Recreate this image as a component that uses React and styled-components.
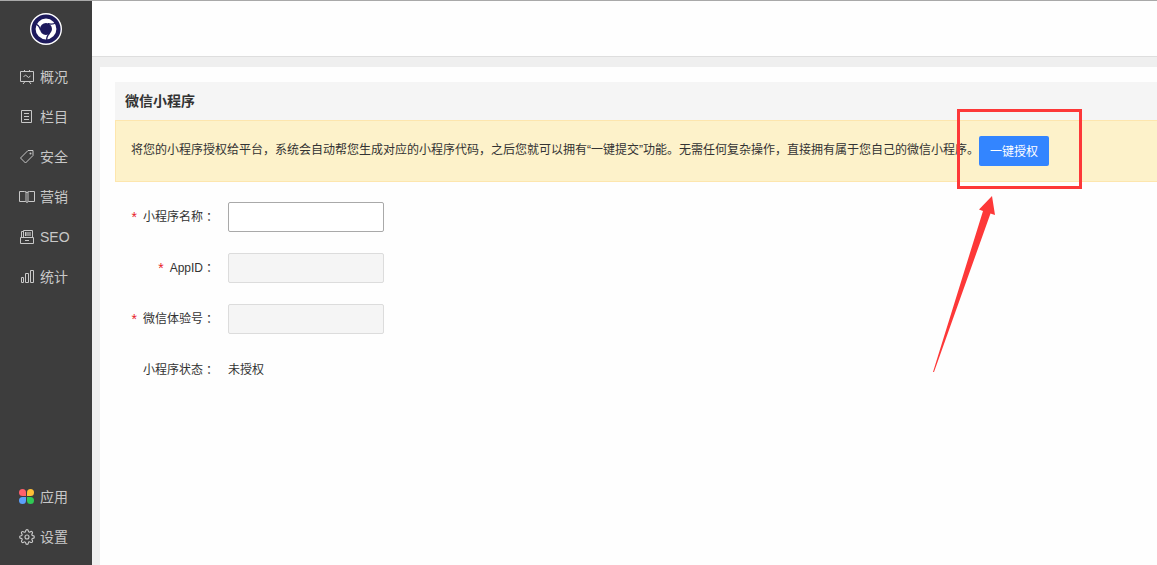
import React from 'react'
import styled, { createGlobalStyle } from 'styled-components'
import { FiSettings } from 'react-icons/fi'

const GlobalStyle = createGlobalStyle`
  * {
    box-sizing: border-box;
  }

  body {
    margin: 0;
    background: #efefef;
    color: #333;
    font-family: "Liberation Sans", "Noto Sans CJK SC", sans-serif;
    font-size: 12px;
    line-height: 18px;
  }
`

const Layout = styled.div`
  display: flex;
  min-height: 100vh;
  border-top: 1px solid #a9a9a9;
  overflow: hidden;
`

const Sidebar = styled.nav`
  display: flex;
  flex-direction: column;
  flex: none;
  width: 92px;
  padding: 12px 0 8px;
  background: #3d3d3d;
`

const LogoLink = styled.a`
  align-self: center;
  height: 32px;
  margin-bottom: 12px;
`

const NavList = styled.ul`
  margin: 0;
  padding: 0;
  list-style: none;
`

const BottomNavList = styled(NavList)`
  margin-top: auto;
`

const NavLink = styled.a`
  display: flex;
  align-items: center;
  gap: 5px;
  height: 40px;
  padding-left: 19px;
  color: #c8c8c8;
  font-size: 14px;
  line-height: 20px;
  text-decoration: none;
`

const Icon = styled.svg.attrs({ width: 16, height: 16, viewBox: '0 0 16 16', 'aria-hidden': true })`
  flex: none;
  fill: none;
  stroke: currentColor;
  stroke-width: 1;
`

const SettingsIcon = styled(FiSettings).attrs({ size: 16, 'aria-hidden': true })`
  flex: none;
  stroke-width: 1.7;
`

const Main = styled.div`
  display: flex;
  flex-direction: column;
  flex: 1;
  min-width: 0;
`

const TopBar = styled.header`
  height: 56px;
  border-bottom: 1px solid #dedede;
  background: #fefefe;
`

const Panel = styled.main`
  flex: 1;
  margin: 10px 0 0 8px;
  padding: 15px 0 15px 15px;
  background: #fefefe;
`

const PanelTitle = styled.h1`
  margin: 0;
  padding: 0 10px;
  background: #f5f5f5;
  font-size: 14px;
  line-height: 38px;
`

const Notice = styled.div`
  display: flex;
  align-items: center;
  height: 62px;
  padding-left: 15px;
  border: 1px solid #fde6ae;
  border-right: 0;
  background: #fdf2ca;
`

const NoticeText = styled.p`
  margin: 0;
  padding-bottom: 2px;
  white-space: nowrap;
`

const Highlighted = styled.div`
  position: relative;
  flex: none;
`

const AuthButton = styled.button`
  display: block;
  width: 70px;
  height: 30px;
  padding: 2px 0 0;
  border: 0;
  border-radius: 2px;
  background: #3385ff;
  color: #fff;
  font: inherit;
`

const HighlightBox = styled.div`
  position: absolute;
  top: -27px;
  left: -22px;
  width: 125px;
  height: 80px;
  border: 3px solid #fd3838;
  pointer-events: none;
`

const HighlightArrow = styled.svg`
  position: absolute;
  top: 60px;
  left: -46px;
  fill: #fd3838;
  pointer-events: none;
`

const Form = styled.form`
  display: flex;
  flex-direction: column;
  gap: 21px;
  padding-top: 20px;
`

const Field = styled.div`
  display: flex;
  align-items: center;
  gap: 13px;
  height: 30px;
`

const FieldLabel = styled.label`
  display: flex;
  justify-content: flex-end;
  width: 100px;
  white-space: nowrap;
`

// centred in its cell, unlike the simplified form
const Colon = styled.span.attrs({ lang: 'zh-TW', children: '：' })`
  font-family: "Noto Sans CJK TC", sans-serif;
`

const Required = styled.span`
  margin-right: 6px;
  color: #e8202a;
  font-size: 14px;
`

const TextInput = styled.input`
  width: 156px;
  height: 30px;
  padding: 0 8px;
  border: 1px solid #a9a9a9;
  border-radius: 2px;
  background: #fff;
  color: #333;
  font: inherit;

  &:disabled {
    border-color: #dcdcdc;
    background: #f5f5f5;
  }
`

const Logo = () => (
  <svg width="32" height="32" viewBox="0 0 32 32" aria-hidden="true">
    <defs>
      <path id="cut" d="M10.500 17C9.500 13.500 8.500 11.500 5 10.800" />
    </defs>
    <circle cx="16" cy="16" r="15.300" fill="#1d1a5c" stroke="#fff" strokeWidth="1.400" />
    <circle cx="16" cy="16" r="8.200" fill="none" stroke="#fff" strokeWidth="4.400" />
    <g fill="none" stroke="#1d1a5c" strokeWidth="1.300">
      <use href="#cut" />
      <use href="#cut" transform="rotate(120 16 16)" />
      <use href="#cut" transform="rotate(240 16 16)" />
    </g>
  </svg>
)

const OverviewIcon = () => (
  <Icon>
    <path d="M1.500 2.500h13v10h-13zM5.500 1v2M10.500 1v2M6 12.500l-2 2.500M10 12.500l2 2.500" />
    <path d="M4.500 8l2-2 3 2.500 2-1.500" />
  </Icon>
)

const ColumnIcon = () => (
  <Icon>
    <path d="M2.500 1.500h10v12h-10zM5 4.500h5M5 7.500h5M5 10.500h5" />
  </Icon>
)

const SecurityIcon = () => (
  <Icon>
    <path d="M9 1.500h5v5L6.500 14L1.500 9z" strokeLinejoin="round" />
    <circle cx="11.500" cy="4.500" r="1" fill="currentColor" stroke="none" />
  </Icon>
)

const MarketingIcon = () => (
  <Icon>
    <path d="M6 3h4v10h-4z" fill="#7f7f7f" stroke="none" />
    <path d="M6.500 12.500h-6v-10h5q2.500 0 2.500 1.500q0-1.500 2.500-1.500h5v10h-6M6.500 12.500l1.500 1 1.500-1" />
  </Icon>
)

const SeoIcon = () => (
  <Icon>
    <path d="M1.500 8.500h13v6h-13zM6 11.500h4M4.500 8.500v-7h9v7M2.500 8.500v-6h2" />
    <path d="M7 3h5v4h-5z" fill="#8a8a8a" stroke="none" />
    <path d="M6.500 3v4" />
  </Icon>
)

const StatsIcon = () => (
  <Icon>
    <path d="M2.500 8.500h2v5h-2zM6.500 4.500h3v9h-3zM11.500 1.500h3v12h-3z" />
  </Icon>
)

const AppsIcon = () => (
  <Icon>
    <g stroke="none">
      <path d="M7 7H3.500A3.500 3.500 0 1 1 7 3.500z" fill="#ff5f6b" />
      <path d="M8 7H11.500A3.500 3.500 0 1 0 8 3.500z" fill="#ffbf36" />
      <path d="M7 8H3.500A3.500 3.500 0 1 0 7 11.500z" fill="#5ba0fb" />
      <path d="M8 8H11.500A3.500 3.500 0 1 1 8 11.500z" fill="#30c955" />
    </g>
  </Icon>
)

const mainNav = [
  { label: '概况', icon: OverviewIcon },
  { label: '栏目', icon: ColumnIcon },
  { label: '安全', icon: SecurityIcon },
  { label: '营销', icon: MarketingIcon },
  { label: 'SEO', icon: SeoIcon },
  { label: '统计', icon: StatsIcon }
]

const bottomNav = [
  { label: '应用', icon: AppsIcon },
  { label: '设置', icon: SettingsIcon }
]

const fields = [
  { id: 'name', label: '小程序名称' },
  { id: 'appid', label: 'AppID', disabled: true },
  { id: 'trial', label: '微信体验号', disabled: true }
]

const renderNav = items => items.map(({ label, icon: ItemIcon }) => (
  <li key={label}>
    <NavLink href="#"><ItemIcon />{label}</NavLink>
  </li>
))

const App = () => (
  <>
    <GlobalStyle />
    <Layout lang="zh-CN">
      <Sidebar>
        <LogoLink href="#" aria-label="首页"><Logo /></LogoLink>
        <NavList>{renderNav(mainNav)}</NavList>
        <BottomNavList>{renderNav(bottomNav)}</BottomNavList>
      </Sidebar>
      <Main>
        <TopBar />
        <Panel>
          <PanelTitle>微信小程序</PanelTitle>
          <Notice>
            <NoticeText>
              将您的小程序授权给平台，系统会自动帮您生成对应的小程序代码，之后您就可以拥有“一键提交”功能。无需任何复杂操作，直接拥有属于您自己的微信小程序。
            </NoticeText>
            <Highlighted>
              <AuthButton type="button">一键授权</AuthButton>
              <HighlightBox />
              <HighlightArrow width="64" height="180" viewBox="0 0 64 180" aria-hidden="true">
                <path d="M59 0L62 19L57.500 17.500L1 176L0 176L50 15L46 13.500Z" />
              </HighlightArrow>
            </Highlighted>
          </Notice>
          <Form>
            {fields.map(({ id, label, disabled }) => (
              <Field key={id}>
                <FieldLabel htmlFor={id}>
                  <Required>*</Required>{label}<Colon />
                </FieldLabel>
                <TextInput id={id} type="text" required disabled={disabled} />
              </Field>
            ))}
            <Field>
              <FieldLabel as="span">小程序状态<Colon /></FieldLabel>
              <span>未授权</span>
            </Field>
          </Form>
        </Panel>
      </Main>
    </Layout>
  </>
)

export default App
